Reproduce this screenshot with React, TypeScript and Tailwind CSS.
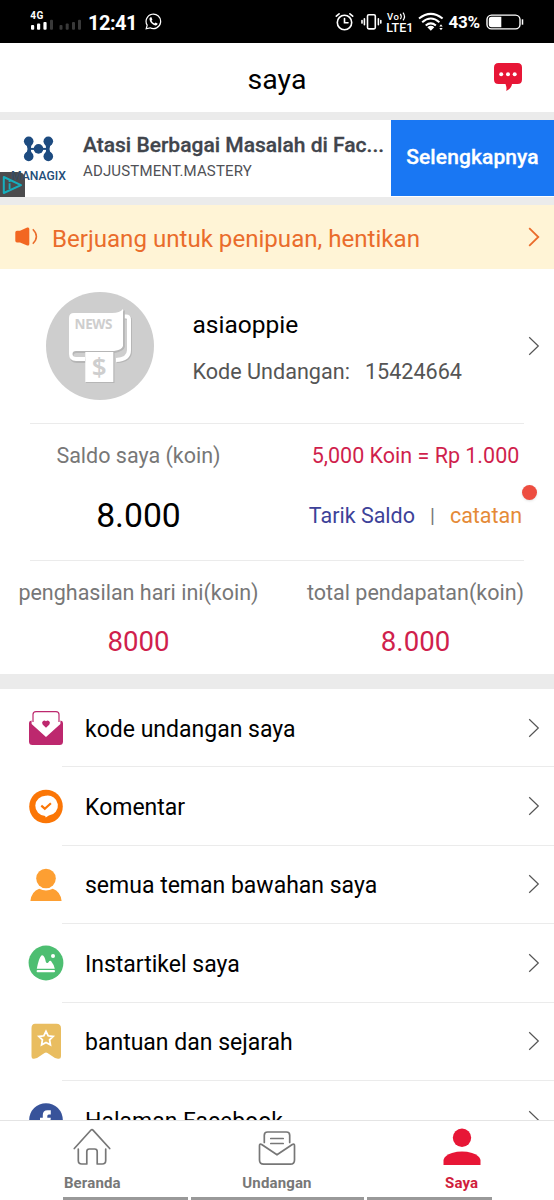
import React from "react";

function Chevron({ className, width = 1.2 }: { className: string; width?: number }) {
  return (
    <svg viewBox="0 0 12 20" className={`h-5 w-3 shrink-0 fill-none ${className}`} stroke="currentColor" strokeWidth={width}>
      <path d="M1.2 1.2 10.3 10 1.2 18.8" />
    </svg>
  );
}

function StatusBar() {
  return (
    <header className="flex h-[43px] shrink-0 items-center bg-black text-white">
      <svg viewBox="0 0 52 24" className="ml-[30px] h-6 w-[52px]">
        <text x="0.3" y="9.4" fontSize="10" fontWeight="700" fill="#fff" fontFamily="Roboto, sans-serif" textLength="13">4G</text>
        <g fill="#fff">
          <rect x="1" y="15" width="3.2" height="4.8" rx="1" />
          <rect x="7" y="13.5" width="3.2" height="6.3" rx="1" />
          <rect x="13.4" y="12" width="3.2" height="7.8" rx="1" />
        </g>
        <g fill="#393939">
          <rect x="20" y="9.8" width="3" height="10" rx="1" />
          <rect x="29.5" y="15" width="3" height="4.8" rx="1" />
          <rect x="35.7" y="13.5" width="3" height="6.3" rx="1" />
          <rect x="42" y="12" width="3" height="7.8" rx="1" />
          <rect x="48" y="9.8" width="3" height="10" rx="1" />
        </g>
      </svg>
      <span className="ml-[6px] mt-[2px] w-[49px] whitespace-nowrap text-[20px] font-bold leading-6 tracking-[-0.5px]">12:41</span>
      <svg viewBox="0 0 18 18" className="ml-2 h-[17px] w-[17px] fill-none stroke-white" strokeWidth="1.3">
        <path d="M1.3 16.7 2.3 12.9A7.7 7.7 0 1 1 5.3 15.7Z" />
        <path d="M5.8 4.5Q4.3 5.4 4.8 7.2C5.7 10.6 8.2 12.5 11 13.2Q12.8 13.5 13.5 11.5L11.2 10.1 10.1 11.2Q8 10.4 6.9 8.1L7.8 7.1 6.9 4.5Z" fill="#fff" stroke="none" />
      </svg>
      <svg viewBox="0 0 190 24" className="ml-auto mr-[29px] h-6 w-[190px] fill-none stroke-white">
        <g strokeWidth="1.6" strokeLinecap="round">
          <circle cx="9.5" cy="12.5" r="7.2" />
          <path d="M9.5 8.5V12.7H13M1.3 6.2 4.1 3.8M17.7 6.2 14.9 3.8" />
          <rect x="32.5" y="4.7" width="7.8" height="14.2" rx="1.3" />
          <path d="M29.4 8.8V14.8M43.4 8.8V14.8M27 10.5V13.1M45.8 10.5V13.1" />
        </g>
        <g fill="#fff" stroke="none" fontFamily="Roboto, sans-serif" fontWeight="500">
          <text x="52" y="10" fontSize="9.5" textLength="12">Vo</text>
          <text x="51.3" y="21.6" fontSize="12.5" textLength="27">LTE1</text>
        </g>
        <path d="M65.3 3.8Q67.2 6.5 65.3 9.2M68 2.6Q71 6.5 68 10.4" strokeWidth="1.2" />
        <g strokeWidth="2">
          <path d="M84 8.5Q95.8-.8 107.6 8.5M87.2 12.2Q95.8 4.7 104.4 12.2M90.7 15.5Q95.8 11.2 100.9 15.5" />
        </g>
        <path d="M92.3 17.2Q95.8 14.4 99.3 17.2L95.8 20.7Z" fill="#fff" stroke="none" />
        <path d="M104.3 16.6 106 14.3 107.7 16.6ZM104.3 18 106 20.3 107.7 18Z" fill="#fff" stroke="none" />
        <text x="113.5" y="18.2" fontSize="17" fontWeight="700" fill="#fff" stroke="none" fontFamily="Roboto, sans-serif" textLength="31.5">43%</text>
        <rect x="152" y="5.1" width="33" height="13.8" rx="4.5" strokeWidth="1.4" />
        <path d="M156.5 6.8H166.3V17.2H156.5Q153.8 17.2 153.8 14.5V9.5Q153.8 6.8 156.5 6.8Z" fill="#fff" stroke="none" />
        <path d="M187.5 9.3V14.7" strokeWidth="1.5" />
      </svg>
    </header>
  );
}

function TitleBar() {
  return (
    <div className="relative flex h-[69px] shrink-0 items-center justify-center bg-white pt-[5px]">
      <h1 className="text-[28.5px] font-normal leading-8">saya</h1>
      <svg viewBox="0 0 28 28" className="absolute right-8 top-5 h-7 w-7">
        <path d="M4.5 0H23.5Q28 0 28 4.5V16.5Q28 21 23.5 21H18Q17.5 25.5 12.2 28 13 25 11.5 21H4.5Q0 21 0 16.5V4.5Q0 0 4.5 0Z" fill="#e71636" />
        <g fill="#fff">
          <circle cx="7.2" cy="11.3" r="2" />
          <circle cx="14" cy="11.3" r="2" />
          <circle cx="20.7" cy="11.3" r="2" />
        </g>
      </svg>
    </div>
  );
}

function AdBanner() {
  return (
    <section className="flex h-[77px] shrink-0 bg-white">
      <div className="relative w-[83px] shrink-0">
        <svg viewBox="0 0 83 77" className="h-[77px] w-[83px]">
          <g fill="#1d4b80">
            <circle cx="28.7" cy="21.3" r="4.8" />
            <circle cx="48.3" cy="21.3" r="4.8" />
            <circle cx="28.7" cy="36.4" r="4.8" />
            <circle cx="48.3" cy="36.4" r="4.8" />
            <circle cx="38.5" cy="28.9" r="4.8" />
            <path d="M25 23Q30 29 25 35H32.4Q29.2 29 32.4 23ZM44.6 23Q47.8 29 44.6 35H52Q47 29 52 23Z" />
          </g>
          <path d="M30 28.9H47" stroke="#1d4b80" strokeWidth="2" />
          <path d="M0 52H17Q25 52 25 59V77H0Z" fill="#4c4c4d" />
          <text x="11" y="60" fontSize="13.2" fontWeight="500" fill="#234d78" fontFamily="Roboto, sans-serif" textLength="55" lengthAdjust="spacingAndGlyphs">MANAGIX</text>
          <path d="M0 52H17Q25 52 25 59V77H0Z" fill="#4c4c4d" opacity=".45" />
          <path d="M3.8 57V73L21 65.2Z" fill="none" stroke="#16aebd" strokeWidth="2" strokeLinejoin="round" />
          <path d="M9.6 63.3V69M9.6 60.2V62" stroke="#16aebd" strokeWidth="1.9" />
        </svg>
      </div>
      <div className="min-w-0 flex-1 whitespace-nowrap pt-3 text-[#41454c]">
        <p className="text-[21px] font-medium leading-[26px] [-webkit-text-stroke:0.3px]">Atasi Berbagai Masalah di Fac...</p>
        <p className="mt-[3px] text-[15px] leading-5 tracking-[0.15px] text-[#505156]">ADJUSTMENT.MASTERY</p>
      </div>
      <button className="h-[76px] w-[163px] shrink-0 bg-[#1977f3] text-[21px] font-medium tracking-[0.1px] text-white [-webkit-text-stroke:0.3px]">Selengkapnya</button>
    </section>
  );
}

function Notice() {
  return (
    <section className="flex h-16 shrink-0 items-center bg-[#fff4d6] pl-[15px] pr-[14px] text-[#ea6c2b]">
      <svg viewBox="0 0 24 20" className="h-5 w-6">
        <path d="M2 3.8H5L12.2.6Q14.3-.1 14.3 2V17Q14.3 19.2 12.2 18.4L5 15.4H2Q.3 15.4.3 13.7V5.5Q.3 3.8 2 3.8Z" fill="#f26722" />
        <path d="M17.8 2.3Q25 9.5 17.8 16.8" fill="none" stroke="currentColor" strokeWidth="1.5" />
      </svg>
      <p className="ml-[13px] mt-[3px] whitespace-nowrap text-[24.1px] leading-8">Berjuang untuk penipuan, hentikan</p>
      <Chevron className="ml-auto" width={1.8} />
    </section>
  );
}

function Avatar() {
  return (
    <svg viewBox="0 0 108 108" className="h-[108px] w-[108px] shrink-0">
      <circle cx="54" cy="54" r="54" fill="#cecece" />
      <g fill="none" stroke="#b6b6b6" strokeWidth="4" transform="translate(1 1)">
        <path d="M77 24.5H80Q83 24.5 83 27.5V58Q83 67.5 70 68" />
      </g>
      <path d="M77 24.5H80Q83 24.5 83 27.5V58Q83 67.5 70 68" fill="none" stroke="#fff" strokeWidth="4" />
      <path d="M28 22H66Q74 22 78 17V54Q77 58 68 60H30Q26.5 60 26.5 63 26.5 66 30 66H39V70H30Q23 70 23 63V27Q23 22 28 22Z" fill="#b6b6b6" transform="translate(.8 1)" />
      <path d="M28 21H66Q74 21 77 17V54Q76 58 68 59H30Q26.5 59 26.5 62 26.5 65 30 65H39V69H30Q23 69 23 62V26Q23 21 28 21Z" fill="#fff" />
      <rect x="40" y="61" width="28.5" height="30" fill="#b6b6b6" />
      <rect x="39.3" y="60" width="28" height="30" fill="#fff" />
      <g fill="#cecece" fontFamily="'Noto Sans', sans-serif" fontWeight="700">
        <text x="28.5" y="36.5" fontSize="13.5" textLength="38">NEWS</text>
        <text x="53.2" y="84" fontSize="26" fontWeight="600" textAnchor="middle">$</text>
      </g>
    </svg>
  );
}

function Profile() {
  return (
    <section className="flex h-[154px] shrink-0 items-center pl-[46px] pr-[14px]">
      <Avatar />
      <div className="ml-[38.5px] whitespace-nowrap pt-1">
        <p className="text-[24.5px] leading-8">asiaoppie</p>
        <p className="mt-[15px] flex text-[21.6px] leading-8 text-[#555]">
          <span>Kode Undangan:</span>
          <span className="ml-[15px]">15424664</span>
        </p>
      </div>
      <Chevron className="ml-auto text-[#555]" />
    </section>
  );
}

function Balance() {
  return (
    <section className="flex h-[251px] shrink-0 flex-col whitespace-nowrap text-center text-[21.5px] leading-8 text-[#777]">
      <div className="mx-[30px] h-px shrink-0 bg-[#ebebeb]" />
      <div className="grid h-[136px] grid-cols-2 pt-[16px]">
        <div>
          <p>Saldo saya (koin)</p>
          <p className="mt-6 text-[33.7px] leading-10 text-black">8.000</p>
        </div>
        <div>
          <p className="text-[#d01f4d]">5,000 Koin = Rp 1.000</p>
          <div className="relative mt-7 flex justify-center">
            <span className="text-[#3d4299]">Tarik Saldo</span>
            <span className="mx-[15px] text-[20px] leading-8">|</span>
            <span className="text-[#e58a37]">catatan</span>
            <span className="absolute right-[17px] top-[-15px] h-[15px] w-[15px] rounded-full bg-[#ed4d40] shadow-sm" />
          </div>
        </div>
      </div>
      <div className="mx-[30px] h-px shrink-0 bg-[#ebebeb]" />
      <div className="grid grid-cols-2 pt-[16px]">
        <div>
          <p>penghasilan hari ini(koin)</p>
          <p className="mt-[17px] text-[27.6px] text-[#d01f4d]">8000</p>
        </div>
        <div>
          <p>total pendapatan(koin)</p>
          <p className="mt-[17px] text-[27.6px] text-[#d01f4d]">8.000</p>
        </div>
      </div>
    </section>
  );
}

const icons = {
  invite: (
    <>
      <path d="M5 12V4.5Q5 1.6 8 1.6H28Q31 1.6 31 4.5V12" fill="none" stroke="#bd286e" strokeWidth="1.2" />
      <path d="M1 13Q1 11 3.6 10.6V14L18 27 32.4 14V10.6Q35 11 35 13V31.5Q35 35 31.5 35H4.5Q1 35 1 31.5Z" fill="#bd286e" />
      <path d="M18 17.8 14.8 14.7Q13.3 12.5 14.8 11.2 16.5 9.8 18 11.2 19.5 9.8 21.2 11.2 22.7 12.5 21.2 14.7Z" fill="#bd286e" />
    </>
  ),
  comment: (
    <>
      <circle cx="18" cy="18.5" r="16.8" fill="#fb7606" />
      <path d="M18 7.7A10.2 10 0 1 1 20.8 27.5L17.7 29.5 17.2 27.9A10.2 10 0 0 1 18 7.7Z" fill="#fff" />
      <path d="M13.3 17.7 16.8 20.7 22.9 15.3" fill="none" stroke="#fb7606" strokeWidth="2.2" />
    </>
  ),
  friends: (
    <>
      <circle cx="18" cy="12.5" r="9.8" fill="#fd9f32" />
      <path d="M2.4 35Q3.5 25.5 11.2 22.8Q18 26.3 24.8 22.8Q32.5 25.5 33.6 35Z" fill="#fd9f32" />
    </>
  ),
  article: (
    <>
      <circle cx="18" cy="18" r="17.4" fill="#4dbe71" />
      <path d="M8.8 23.8Q10.8 13 13.4 10.5Q16.3 9 17.8 16.8Q18.7 19.2 20.5 17.2Q22.3 14.5 23.8 17.2Q26 19.5 26.8 23.8Z" fill="#fff" />
      <rect x="8.6" y="25" width="18.4" height="2.3" rx="1" fill="#fff" />
      <circle cx="25" cy="11" r="2" fill="#fff" />
    </>
  ),
  help: (
    <g transform="translate(0 .8)">
      <path d="M7 0H28.5Q33 0 33 4.5V32.5Q33 35.5 30 35L27 34.3 19.5 29.3Q18 28.3 16.5 29.3L9 34.3 6 35Q3.5 35.5 3.5 32.5V4.5Q3.5 0 7 0Z" fill="#e9bd60" />
      <path d="M18 7.5 20.2 12 25.1 12.7 21.6 16.1 22.4 21 18 18.7 13.6 21 14.4 16.1 10.9 12.7 15.8 12Z" fill="none" stroke="#fff" strokeWidth="1.8" />
    </g>
  ),
  facebook: (
    <>
      <circle cx="18" cy="18" r="16.8" fill="#38539a" />
      <path d="M14.8 35V20H12V15.7H14.8V13Q14.8 8.2 19.5 8.2H22.8V12.5H20.8Q19.3 12.5 19.3 14V15.7H22.8L22.3 20H19.3V35Z" fill="#fff" />
    </>
  ),
};

const rows: { icon: keyof typeof icons; label: string }[] = [
  { icon: "invite", label: "kode undangan saya" },
  { icon: "comment", label: "Komentar" },
  { icon: "friends", label: "semua teman bawahan saya" },
  { icon: "article", label: "Instartikel saya" },
  { icon: "help", label: "bantuan dan sejarah" },
  { icon: "facebook", label: "Halaman Facebook" },
];

function MenuList() {
  return (
    <ul className="min-h-0 flex-1 overflow-hidden">
      {rows.map((row) => (
        <li key={row.icon} className="flex h-[78.4px] flex-col">
          <div className="flex flex-1 items-center pl-7 pr-[14px]">
            <svg viewBox="0 0 36 36" className="h-9 w-9 shrink-0">{icons[row.icon]}</svg>
            <span className="ml-[21px] mt-1 whitespace-nowrap text-[23px] leading-8">{row.label}</span>
            <Chevron className="ml-auto text-[#555]" />
          </div>
          <div className="ml-[62px] h-px shrink-0 bg-[#ebebeb]" />
        </li>
      ))}
    </ul>
  );
}

function TabBar() {
  return (
    <nav className="flex h-20 shrink-0 flex-col border-t border-[#e4e4e4] bg-white">
      <div className="grid flex-1 grid-cols-3 text-[15px] font-bold leading-5 text-[#777]">
        <a className="flex flex-col items-center pt-[7px]">
          <svg viewBox="0 0 38 38" className="h-[38px] w-[38px] fill-none stroke-[#777]" strokeWidth="1.7" strokeLinecap="round" strokeLinejoin="round">
            <path d="M1.3 20.5 17.8 2.3Q19 1 20.2 2.3L36.7 20.5M5.3 21V32.5Q5.3 36 8.8 36H13.8V23.5Q13.8 21 16.3 21H21.7Q24.2 21 24.2 23.5V36H29.2Q32.7 36 32.7 32.5V21" />
          </svg>
          <span className="mt-[7px] tracking-[0.15px]">Beranda</span>
        </a>
        <a className="flex flex-col items-center pt-[7px]">
          <svg viewBox="0 0 38 38" className="h-[38px] w-[38px] fill-none stroke-[#777]" strokeWidth="1.7" strokeLinecap="round" strokeLinejoin="round">
            <path d="M6.3 14.5V7.3Q6.3 4 9.6 4H28.4Q31.7 4 31.7 7.3V14.5M12.8 10.5H25.2M12.8 15.5H25.2M1.5 17.8Q1.5 15.3 3.7 16.5L19 26.8 34.3 16.5Q36.5 15.3 36.5 17.8V32Q36.5 36.2 32.3 36.2H5.7Q1.5 36.2 1.5 32Z" />
          </svg>
          <span className="mt-[7px] tracking-[0.15px]">Undangan</span>
        </a>
        <a className="flex flex-col items-center pt-[7px] text-[#d01d3c]">
          <svg viewBox="0 0 38 38" className="h-[38px] w-[38px] fill-[#e71636]">
            <circle cx="19" cy="9.8" r="9.2" />
            <path d="M.5 37V32Q1.5 27.2 9 24.9Q19 22 29 24.9Q36.5 27.2 37.5 32V37Z" />
          </svg>
          <span className="mt-[7px] tracking-[0.15px]">Saya</span>
        </a>
      </div>
      <div className="ml-[62.5px] flex h-[3.5px] shrink-0 gap-[3px]">
        <div className="w-[125px] bg-[#999]" />
        <div className="w-[173.5px] bg-[#999]" />
        <div className="w-[124.5px] bg-[#999]" />
      </div>
    </nav>
  );
}

export default function App() {
  return (
    <main className="flex h-[1200px] w-[554px] flex-col overflow-hidden bg-white font-['Roboto',sans-serif] text-black">
      <StatusBar />
      <TitleBar />
      <div className="h-2 shrink-0 bg-[#ebebeb]" />
      <AdBanner />
      <div className="h-2 shrink-0 bg-[#ebebeb]" />
      <Notice />
      <Profile />
      <Balance />
      <div className="h-[15px] shrink-0 bg-[#ebebeb]" />
      <MenuList />
      <TabBar />
    </main>
  );
}
